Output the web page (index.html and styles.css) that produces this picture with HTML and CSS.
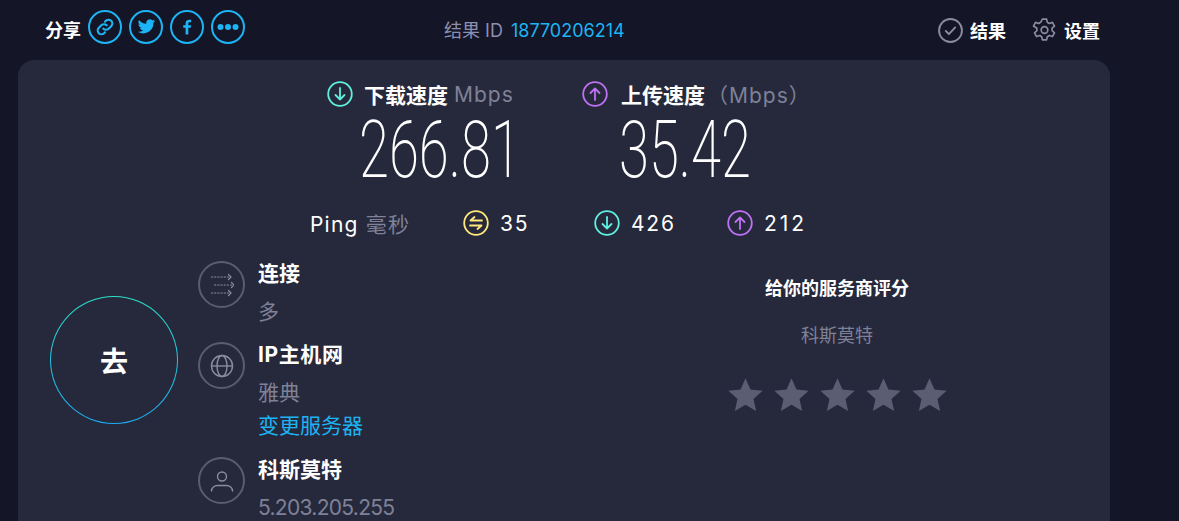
FILE: index.html
```html
<!DOCTYPE html>
<html lang="zh-CN">
<head>
    <meta charset="UTF-8">
    <title>结果</title>
    <link rel="stylesheet" href="styles.css">
</head>
<body>
    <header class="top-bar">
        <div class="share">
            <span class="share-label">分享</span>
            <a class="share-btn"><svg viewBox="0 0 24 24" width="20" height="20" fill="none" stroke="currentColor" stroke-width="2.6" stroke-linecap="round"><path d="M10 14a4.500 4.500 0 0 0 6.400 0l3-3A4.500 4.500 0 0 0 13 4.600l-1 1"/><path d="M14 10a4.500 4.500 0 0 0-6.400 0l-3 3a4.500 4.500 0 0 0 6.400 6.400l1-1"/></svg></a>
            <a class="share-btn"><svg viewBox="0 0 24 24" width="19" height="19" fill="currentColor"><path d="M23 5.100c-.8.4-1.700.6-2.600.7.900-.6 1.600-1.400 2-2.500-.9.5-1.800.9-2.900 1.100A4.500 4.500 0 0 0 11.800 8.500C8 8.300 4.700 6.500 2.500 3.700a4.500 4.500 0 0 0 1.400 6c-.7 0-1.400-.2-2-.6 0 2.200 1.500 4 3.600 4.500-.7.2-1.400.2-2 .1.600 1.800 2.200 3.100 4.200 3.100A9 9 0 0 1 1 18.700a12.800 12.800 0 0 0 19.700-11.400c.9-.6 1.700-1.400 2.300-2.200z"/></svg></a>
            <a class="share-btn"><svg viewBox="0 0 24 24" width="20" height="20" fill="currentColor"><path d="M13.600 21v-8h2.900l.5-3.200h-3.400V7.900c0-1 .4-1.600 1.700-1.600H17V3.400c-.4 0-1.400-.2-2.500-.2-2.500 0-4.200 1.500-4.200 4.300v2.300H7.500V13h2.800v8z"/></svg></a>
            <a class="share-btn"><svg viewBox="0 0 24 24" width="24" height="24" fill="currentColor"><circle cx="4.500" cy="12" r="3"/><circle cx="12" cy="12" r="3"/><circle cx="19.500" cy="12" r="3"/></svg></a>
        </div>
        <div class="result-id">结果 ID <a class="link">18770206214</a></div>
        <nav class="top-nav">
            <a class="nav-item">
                <svg viewBox="0 0 24 24" width="25" height="25" fill="none" stroke="#8b8c9f" stroke-width="1.800" stroke-linecap="round" stroke-linejoin="round"><circle cx="12" cy="12" r="11"/><path d="M7.500 12.500l3 3 6-6.500"/></svg>
                <span>结果</span>
            </a>
            <a class="nav-item">
                <svg viewBox="0 0 24 24" width="25" height="26" fill="none" stroke="#8b8c9f" stroke-width="1.600" stroke-linejoin="round"><circle cx="12" cy="12" r="3.200"/><path d="M10 1.500h4l.7 3.100 1.900 1.100 3-1 2 3.500-2.300 2.100v2.400l2.300 2.100-2 3.500-3-1-1.900 1.100-.7 3.100h-4l-.7-3.100-1.900-1.100-3 1-2-3.500 2.300-2.100v-2.400L1.400 8.200l2-3.500 3 1 1.900-1.100z"/></svg>
                <span>设置</span>
            </a>
        </nav>
    </header>

    <main class="card">
        <section class="speeds">
            <div class="speed speed-down">
                <div class="speed-head">
                    <svg class="ico" viewBox="0 0 26 26" width="26" height="26" fill="none" stroke="#5ff0e0" stroke-width="1.800" stroke-linecap="round" stroke-linejoin="round"><circle cx="13" cy="13" r="11.800"/><path d="M13 7v11.500M8.500 14l4.500 4.500 4.500-4.500"/></svg>
                    <b>下载速度</b> <span class="unit">Mbps</span>
                </div>
                <div class="speed-num">266.81</div>
            </div>
            <div class="speed speed-up">
                <div class="speed-head">
                    <svg class="ico" viewBox="0 0 26 26" width="26" height="26" fill="none" stroke="#bf71f5" stroke-width="1.800" stroke-linecap="round" stroke-linejoin="round"><circle cx="13" cy="13" r="11.800"/><path d="M13 19V7.500M8.500 12L13 7.500l4.500 4.500"/></svg>
                    <b>上传速度</b> <span class="unit unit-wide">（Mbps）</span>
                </div>
                <div class="speed-num">35.42</div>
            </div>
        </section>

        <section class="ping-row">
            <div class="ping-label">Ping <span class="unit">毫秒</span></div>
            <div class="ping-item ping-idle">
                <svg viewBox="0 0 26 26" width="26" height="26" fill="none" stroke="#ffe97a" stroke-width="1.800" stroke-linecap="round" stroke-linejoin="round"><circle cx="13" cy="13" r="11.800"/><path d="M19 10.500H7.500L11.500 7M7 15.500h11.500L14.500 19"/></svg>
                <span>35</span>
            </div>
            <div class="ping-item ping-down">
                <svg viewBox="0 0 26 26" width="26" height="26" fill="none" stroke="#5ff0e0" stroke-width="1.800" stroke-linecap="round" stroke-linejoin="round"><circle cx="13" cy="13" r="11.800"/><path d="M13 7v11.500M8.500 14l4.500 4.500 4.500-4.500"/></svg>
                <span>426</span>
            </div>
            <div class="ping-item ping-up">
                <svg viewBox="0 0 26 26" width="26" height="26" fill="none" stroke="#bf71f5" stroke-width="1.800" stroke-linecap="round" stroke-linejoin="round"><circle cx="13" cy="13" r="11.800"/><path d="M13 19V7.500M8.500 12L13 7.500l4.500 4.500"/></svg>
                <span>212</span>
            </div>
        </section>

        <section class="bottom">
            <div class="go-wrap"><a class="go-btn">去</a></div>
            <div class="info-list">
                <div class="info-row">
                    <span class="info-ico"><svg viewBox="0 0 24 24" width="24" height="24" fill="none" stroke="#8b8c9f" stroke-width="1.200" stroke-linecap="round" stroke-linejoin="round"><path stroke-dasharray="1.200 2" d="M1.500 4h17M4.500 12h17M1.500 20h17"/><path d="M18.500 1.500L21 4l-2.500 2.500M21.500 9.500L24 12l-2.500 2.500M18.500 17.500L21 20l-2.500 2.500"/></svg></span>
                    <div class="info-text">
                        <div class="info-title">连接</div>
                        <div class="info-sub">多</div>
                    </div>
                </div>
                <div class="info-row row-host">
                    <span class="info-ico"><svg viewBox="0 0 24 24" width="24" height="24" fill="none" stroke="#8b8c9f" stroke-width="1.400"><circle cx="12" cy="12" r="10.500"/><ellipse cx="12" cy="12" rx="5" ry="10.500"/><path d="M1.500 12h21"/></svg></span>
                    <div class="info-text">
                        <div class="info-title">IP主机网</div>
                        <div class="info-sub">雅典</div>
                        <a class="link change-server">变更服务器</a>
                    </div>
                </div>
                <div class="info-row row-isp">
                    <span class="info-ico"><svg viewBox="0 0 24 24" width="24" height="24" fill="none" stroke="#8b8c9f" stroke-width="1.400" stroke-linecap="round"><circle cx="12" cy="7.500" r="4.500"/><path d="M1.500 22c0-3.500 3-5.500 6-5.500h9c3 0 6 2 6 5.500"/></svg></span>
                    <div class="info-text">
                        <div class="info-title">科斯莫特</div>
                        <div class="info-sub info-ip">5.203.205.255</div>
                    </div>
                </div>
            </div>
            <div class="rating">
                <div class="rating-title">给你的服务商评分</div>
                <div class="rating-isp">科斯莫特</div>
                <div class="stars">
                    <svg viewBox="0 0 24 24" width="37" height="37"><path d="M12 1.500l3.200 7.300 7.900.8-5.900 5.300 1.700 7.800L12 18.700l-6.900 4 1.700-7.800L.9 9.600l7.900-.8z"/></svg>
                    <svg viewBox="0 0 24 24" width="37" height="37"><path d="M12 1.500l3.200 7.300 7.900.8-5.900 5.300 1.700 7.800L12 18.700l-6.900 4 1.700-7.800L.9 9.600l7.900-.8z"/></svg>
                    <svg viewBox="0 0 24 24" width="37" height="37"><path d="M12 1.500l3.200 7.300 7.900.8-5.900 5.300 1.700 7.800L12 18.700l-6.900 4 1.700-7.800L.9 9.600l7.900-.8z"/></svg>
                    <svg viewBox="0 0 24 24" width="37" height="37"><path d="M12 1.500l3.200 7.300 7.900.8-5.900 5.300 1.700 7.800L12 18.700l-6.900 4 1.700-7.800L.9 9.600l7.900-.8z"/></svg>
                    <svg viewBox="0 0 24 24" width="37" height="37"><path d="M12 1.500l3.200 7.300 7.900.8-5.900 5.300 1.700 7.800L12 18.700l-6.900 4 1.700-7.800L.9 9.600l7.900-.8z"/></svg>
                </div>
            </div>
        </section>
    </main>
</body>
</html>
```

FILE: styles.css
```css
/* General Reset */
* {
    margin: 0;
    padding: 0;
    box-sizing: border-box;
}

html, body {
    height: 521px;
    overflow: hidden;
}

body {
    font-family: 'Inter', 'Noto Sans CJK SC', sans-serif;
    background-color: #141526;
    color: #fff;
}

.link {
    color: #1cb4f4;
}

/* Top Bar */
.top-bar {
    display: flex;
    align-items: center;
    width: 1110px;
    height: 60px;
    padding: 0 0 2px 45px;
}

.share {
    display: flex;
    align-items: center;
    width: 300px;
}

.share-label {
    font-size: 18px;
    font-weight: 700;
    margin-right: 7px;
}

.share-btn {
    display: flex;
    align-items: center;
    justify-content: center;
    width: 34px;
    height: 34px;
    margin: 0 7px 5px 0;
    border: 2px solid #1cb4f4;
    border-radius: 50%;
    color: #1cb4f4;
}

.result-id {
    width: 320px;
    margin-left: 99px;
    font-size: 18px;
    color: #8b8fb0;
    white-space: nowrap;
}

.result-id .link {
    margin-left: 3px;
}

.top-nav {
    display: flex;
    align-items: center;
    margin: 2px 0 0 174px;
    gap: 26px;
}

.nav-item {
    display: flex;
    align-items: center;
    gap: 7px;
    font-size: 18px;
    font-weight: 700;
}

/* Main Card */
.card {
    width: 1092px;
    height: 461px;
    margin-left: 18px;
    background-color: #26293b;
    border-radius: 16px 16px 0 0;
}

/* Speeds */
.speeds {
    display: flex;
    padding: 21px 0 0 309px;
}

.speed-down {
    width: 255px;
}

.speed-head {
    display: flex;
    align-items: center;
    height: 26px;
    font-size: 21px;
    white-space: pre;
}

.speed-head b {
    margin-left: 11px;
    font-weight: 700;
}

.speed-up .speed-head b {
    margin-left: 13px;
}

.unit {
    color: #7f8198;
    font-weight: 400;
}

.speed-head .unit {
    margin-left: 6px;
    letter-spacing: 1px;
}

.speed-head .unit-wide {
    margin-left: 2px;
    letter-spacing: 1px;
}

.speed-num {
    font-family: 'Roboto', sans-serif;
    font-size: 80px;
    font-weight: 200;
    line-height: 76px;
    margin: 5px 0 0 32px;
    transform: scaleX(0.68);
    transform-origin: left center;
    white-space: nowrap;
}

.speed-up .speed-num {
    margin-left: 37px;
}

/* Ping Row */
.ping-row {
    display: flex;
    align-items: center;
    height: 26px;
    margin-top: 22px;
    padding-left: 292px;
    font-size: 21px;
}

.ping-label {
    width: 153px;
    letter-spacing: 1.2px;
    white-space: nowrap;
}

.ping-item {
    display: flex;
    align-items: center;
    gap: 11px;
    letter-spacing: 1.800px;
}

.ping-idle {
    width: 131px;
}

.ping-down {
    width: 133px;
}

.ping-up {
    letter-spacing: 3px;
}

/* Bottom Section */
.bottom {
    display: flex;
    margin-top: 25px;
    padding-left: 32px;
}

.go-wrap {
    padding-top: 35px;
    width: 148px;
}

.go-btn {
    display: flex;
    align-items: center;
    justify-content: center;
    width: 128px;
    height: 128px;
    font-size: 28px;
    font-weight: 700;
    border: 1.5px solid transparent;
    border-radius: 50%;
    background: linear-gradient(#26293b, #26293b) padding-box,
                linear-gradient(#2ce0c8, #1cacf4) border-box;
}

.info-list {
    width: 390px;
}

.info-row {
    display: flex;
    gap: 13px;
}

.row-host {
    margin-top: 17px;
}

.row-isp {
    margin-top: 18px;
}

.info-ico {
    flex: none;
    display: flex;
    align-items: center;
    justify-content: center;
    width: 47px;
    height: 47px;
    border: 2px solid #5a5c70;
    border-radius: 50%;
}

.info-title {
    font-size: 21px;
    font-weight: 700;
    line-height: 26px;
}

.row-host .info-title {
    letter-spacing: 0.6px;
}

.info-sub {
    font-size: 21px;
    line-height: 26px;
    margin-top: 12px;
    color: #7f8198;
}

.info-ip {
    letter-spacing: -0.7px;
}

.change-server {
    display: block;
    font-size: 21px;
    line-height: 26px;
    margin-top: 7px;
}

/* Rating */
.rating {
    width: 240px;
    margin-left: 129px;
    text-align: center;
}

.rating-title {
    font-size: 18px;
    font-weight: 700;
    line-height: 22px;
    margin-top: 17px;
}

.rating-isp {
    font-size: 18px;
    line-height: 24px;
    color: #7f8198;
    margin-top: 24px;
}

.stars {
    display: flex;
    justify-content: center;
    gap: 9px;
    margin-top: 28px;
}

.stars svg {
    fill: #5b5d72;
}
```
